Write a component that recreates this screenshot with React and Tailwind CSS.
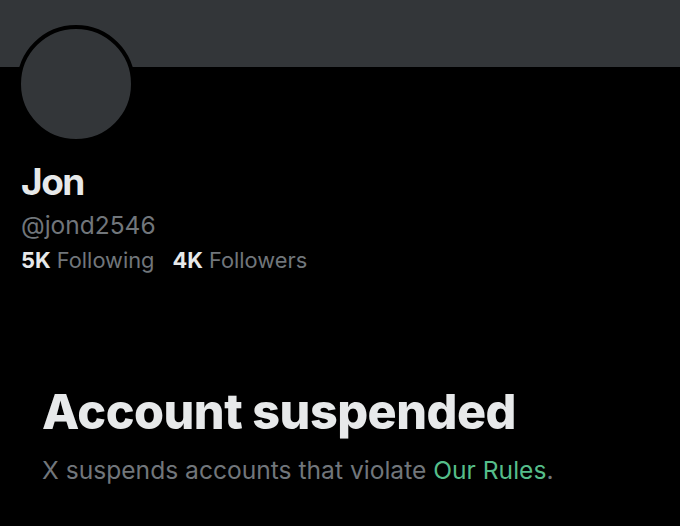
export default function App() {
  return (
    <div className="w-[680px] h-[526px] bg-black overflow-hidden" style={{ fontFamily: "Inter, 'Noto Sans', sans-serif" }}>
      <div className="h-[67px] bg-[#333639]" />
      <div className="ml-[17px] -mt-[42px] w-[118px] h-[118px] rounded-full border-[4px] border-black bg-[#333639]" />
      <div className="pl-[21px] pt-[17px]">
        <div className="text-[37px] leading-[44px] font-bold text-[#e7e9ea] tracking-[-1.5px]">Jon</div>
        <div className="text-[24.5px] leading-[30px] text-[#71767b] mt-[6px]">@jond2546</div>
        <div className="flex gap-[18px] text-[21.8px] leading-[26px] mt-[7px]">
          <span><span className="font-bold text-[#e7e9ea]">5K</span> <span className="text-[#71767b]">Following</span></span>
          <span><span className="font-bold text-[#e7e9ea]">4K</span> <span className="text-[#71767b]">Followers</span></span>
        </div>
      </div>
      <div className="pl-[42px] pt-[112px]">
        <div className="text-[48.5px] leading-[54px] font-extrabold text-[#e7e9ea] tracking-[-0.5px]">Account suspended</div>
        <div className="text-[24.6px] leading-[30px] text-[#71767b] mt-[16px]">
          X suspends accounts that violate <span className="text-[#55bd8a]">Our Rules</span>.
        </div>
      </div>
    </div>
  );
}
